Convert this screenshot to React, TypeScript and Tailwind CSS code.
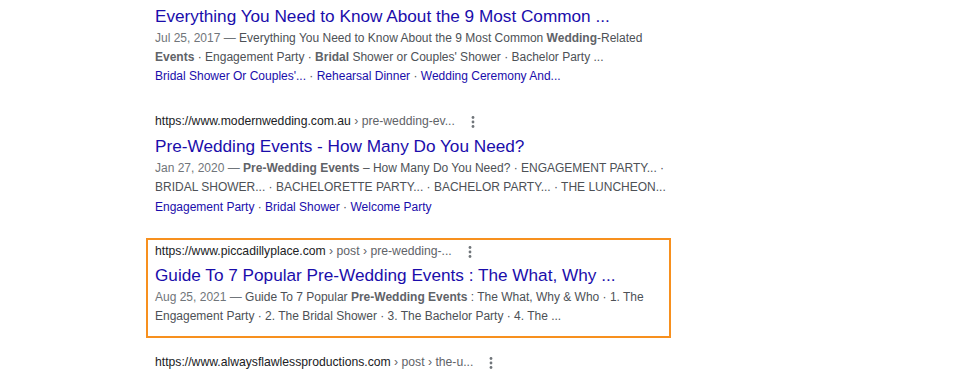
import React from "react";

const Dots = () => (
  <svg width="4" height="14" viewBox="0 0 4 14" className="ml-[16px] shrink-0">
    <circle cx="2" cy="2.5" r="1.4" fill="#70757a" />
    <circle cx="2" cy="7" r="1.4" fill="#70757a" />
    <circle cx="2" cy="11.5" r="1.4" fill="#70757a" />
  </svg>
);

const Sep = () => <span className="text-[#4d5156]"> · </span>;

const UrlLine = ({ domain, crumbs }: { domain: string; crumbs: string }) => (
  <div className="flex items-center h-[19px] text-[12.2px] leading-[19px] whitespace-nowrap">
    <span className="text-[#202124]">{domain}</span>
    <span className="text-[#5f6368] whitespace-pre"> › {crumbs}</span>
    <Dots />
  </div>
);

const Title = ({ children, className = "" }: { children: React.ReactNode; className?: string }) => (
  <div className={`text-[17.2px] leading-[24px] text-[#1a0dab] whitespace-nowrap ${className}`}>{children}</div>
);

const Line = ({ children, className = "" }: { children: React.ReactNode; className?: string }) => (
  <div className={`text-[12px] leading-[19px] text-[#4d5156] whitespace-nowrap ${className}`}>{children}</div>
);

const DateText = ({ children }: { children: React.ReactNode }) => (
  <span className="text-[#70757a]">{children} — </span>
);

const B = ({ children }: { children: React.ReactNode }) => (
  <span className="font-bold text-[#5f6368]">{children}</span>
);

const L = ({ children }: { children: React.ReactNode }) => (
  <span className="text-[#1a0dab]">{children}</span>
);

export default function App() {
  return (
    <div
      className="w-[980px] h-[380px] bg-white overflow-hidden"
      style={{ fontFamily: '"Liberation Sans", Arial, sans-serif' }}
    >
      <div className="pl-[155px] pt-[4px] flex flex-col">
        {/* Result 1 */}
        <div className="flex flex-col">
          <Title>Everything You Need to Know About the 9 Most Common ...</Title>
          <Line className="mt-[1px]">
            <DateText>Jul 25, 2017</DateText>Everything You Need to Know About the 9 Most Common <B>Wedding</B>-Related
          </Line>
          <Line>
            <B>Events</B> · Engagement Party · <B>Bridal</B> Shower or Couples' Shower · Bachelor Party ...
          </Line>
          <Line>
            <L>Bridal Shower Or Couples'...</L>
            <Sep />
            <L>Rehearsal Dinner</L>
            <Sep />
            <L>Wedding Ceremony And...</L>
          </Line>
        </div>

        {/* Result 2 */}
        <div className="flex flex-col mt-[26px]">
          <UrlLine domain="https://www.modernwedding.com.au" crumbs="pre-wedding-ev..." />
          <Title className="mt-[3px]">Pre-Wedding Events - How Many Do You Need?</Title>
          <Line className="mt-[1px]">
            <DateText>Jan 27, 2020</DateText>
            <B>Pre-Wedding Events</B> – How Many Do You Need? · ENGAGEMENT PARTY... ·
          </Line>
          <Line>BRIDAL SHOWER... · BACHELORETTE PARTY... · BACHELOR PARTY... · THE LUNCHEON...</Line>
          <Line className="mt-[1px]">
            <L>Engagement Party</L>
            <Sep />
            <L>Bridal Shower</L>
            <Sep />
            <L>Welcome Party</L>
          </Line>
        </div>

        {/* Result 3 highlighted */}
        <div className="-ml-[9px] mt-[21px] w-[525px] h-[100px] border-2 border-[#f7901e] pl-[7px] pt-[2px] flex flex-col">
          <UrlLine domain="https://www.piccadillyplace.com" crumbs="post › pre-wedding-..." />
          <Title className="mt-[2px]">Guide To 7 Popular Pre-Wedding Events : The What, Why ...</Title>
          <Line className="mt-[1px]">
            <DateText>Aug 25, 2021</DateText>Guide To 7 Popular <B>Pre-Wedding Events</B> : The What, Why &amp; Who · 1. The
          </Line>
          <Line>Engagement Party · 2. The Bridal Shower · 3. The Bachelor Party · 4. The ...</Line>
        </div>

        {/* Result 4 */}
        <div className="flex flex-col mt-[15px]">
          <UrlLine domain="https://www.alwaysflawlessproductions.com" crumbs="post › the-u..." />
        </div>
      </div>
    </div>
  );
}
